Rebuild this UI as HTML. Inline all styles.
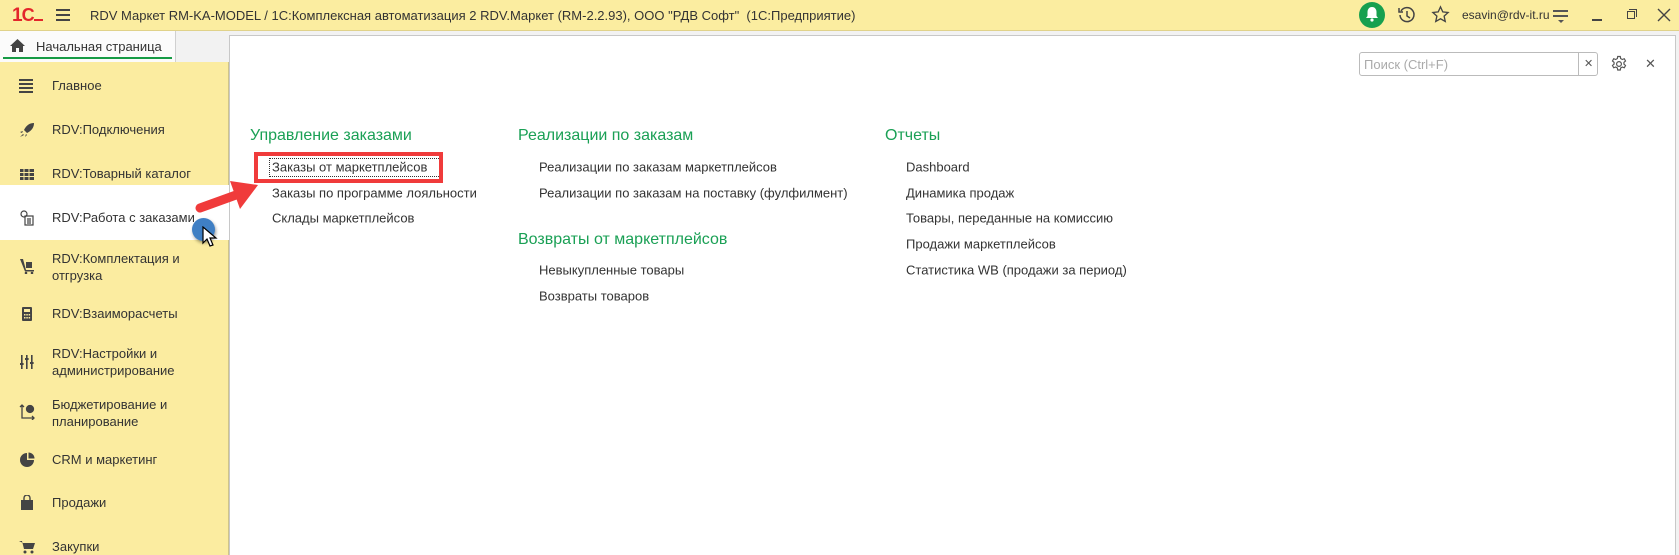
<!DOCTYPE html>
<html><head><meta charset="utf-8">
<style>
*{margin:0;padding:0;box-sizing:border-box}
html,body{width:1679px;height:555px;overflow:hidden;background:#f2f2f2}
body{font-family:"Liberation Sans",Arial,sans-serif;font-size:13px;color:#333;position:relative}
.a{position:absolute;white-space:nowrap}
#top{position:absolute;left:0;top:0;width:1679px;height:31px;background:#fbeda0;border-bottom:1px solid #e0d28a}
#tab{position:absolute;left:0;top:31px;width:176px;height:31px;background:#fbfbfb;border-right:1px solid #d0d0d0}
#side{position:absolute;left:0;top:62px;width:229px;height:493px;background:#fbeca0;border-right:1px solid #cfc48a}
#main{position:absolute;left:229px;top:35px;width:1447px;height:520px;background:#fff;border:1px solid #c8c8c8;border-bottom:none}
.si{position:absolute;left:52px;font-size:13px;color:#333;line-height:17px}
.ic{position:absolute;left:19px;width:16px;height:16px}
.h{position:absolute;color:#1aa055;font-size:16px;white-space:nowrap;transform:translateY(-50%)}
.l{position:absolute;color:#333;font-size:13px;white-space:nowrap;transform:translateY(-50%)}
</style></head><body>
<div id="top"></div>
<div class="a" style="left:12px;top:6px;color:#e3262b;font-weight:bold;font-size:19px;letter-spacing:-1px;line-height:19px">1<span style="font-size:18px">C</span></div>
<div class="a" style="left:34px;top:19px;width:9px;height:2px;background:#e3262b"></div>
<div class="a" style="left:56px;top:9px;width:14px;height:1.5px;background:#444;box-shadow:0 5px 0 #444,0 10px 0 #444"></div>
<div class="a" style="left:90px;top:8px;font-size:13px;color:#333">RDV Маркет RM-KA-MODEL / 1C:Комплексная автоматизация 2 RDV.Маркет (RM-2.2.93), ООО "РДВ Софт"&nbsp; (1С:Предприятие)</div>
<div class="a" style="left:1359px;top:2px;width:26px;height:26px;border-radius:50%;background:#17a04f"></div>
<svg class="a" style="left:1364px;top:6px" width="16" height="17" viewBox="0 0 16 17"><path d="M8 1c-3 0-4.5 2.5-4.5 5v4L2 12h12l-1.5-2V6C12.5 3.5 11 1 8 1z" fill="#fff"/><circle cx="8" cy="14" r="1.6" fill="#fff"/></svg>
<svg class="a" style="left:1397px;top:5px" width="20" height="20" viewBox="0 0 20 20" fill="none" stroke="#444" stroke-width="1.5"><path d="M4 6A7 7 0 1 1 3 10"/><path d="M2 3v4h4" /><path d="M10 6v5l3 2"/></svg>
<svg class="a" style="left:1431px;top:5px" width="19" height="19" viewBox="0 0 20 20" fill="none" stroke="#444" stroke-width="1.4"><path d="M10 2l2.4 5.3 5.6.6-4.2 3.8 1.2 5.6L10 14.5l-5 2.8 1.2-5.6L2 7.9l5.6-.6z"/></svg>
<div class="a" style="left:1462px;top:8px;font-size:12px;color:#333">esavin@rdv-it.ru</div>
<div class="a" style="left:1553px;top:10px;width:15px;height:1.5px;background:#555;box-shadow:0 5px 0 #555"></div>
<div class="a" style="left:1558px;top:20px;border:3px solid transparent;border-top:3px solid #555"></div>
<div class="a" style="left:1592px;top:19px;width:10px;height:1.5px;background:#444"></div>
<div class="a" style="left:1627px;top:11px;width:8px;height:8px;border:1.3px solid #444"></div>
<div class="a" style="left:1629px;top:9px;width:8px;height:8px;border-top:1.3px solid #444;border-right:1.3px solid #444"></div>
<svg class="a" style="left:1657px;top:8px" width="14" height="14" viewBox="0 0 14 14" stroke="#444" stroke-width="1.4"><path d="M1 1l12 12M13 1L1 13"/></svg>

<div id="tab"></div>
<svg class="a" style="left:10px;top:39px" width="15" height="13" viewBox="0 0 15 13"><path d="M7.5 0L0 7h2v6h4V9h3v4h4V7h2z" fill="#444"/></svg>
<div class="a" style="left:36px;top:39px;font-size:13px;color:#333">Начальная страница</div>
<div class="a" style="left:3px;top:57px;width:169px;height:2px;background:#169b45"></div>

<div id="side"></div>
<div class="a" style="left:0;top:185px;width:229px;height:55px;background:#fff"></div>
<div class="ic" style="top:78px"><div style="margin-top:1px;height:2px;background:#444;box-shadow:0 4px 0 #444,0 8px 0 #444,0 12px 0 #444;width:14px"></div></div>
<svg class="ic" style="top:122px" viewBox="0 0 16 16"><path d="M15 1c-5 0-8 3-10 7l3 3c4-2 7-5 7-10zM4 9l-3 1 2 1zM7 12l-1 3 2-2zM4 12l-3 3 4-2z" fill="#444"/></svg>
<svg class="ic" style="top:166px" viewBox="0 0 16 16" fill="#444"><rect x="1" y="3" width="14" height="3"/><rect x="1" y="7" width="14" height="3"/><rect x="1" y="11" width="14" height="3"/><rect x="4.5" y="3" width="1" height="11" fill="#fbeca0"/><rect x="9.5" y="3" width="1" height="11" fill="#fbeca0"/></svg>
<svg class="ic" style="top:210px" viewBox="0 0 16 16" fill="none" stroke="#444" stroke-width="1.2"><circle cx="5" cy="4" r="3"/><rect x="6" y="6" width="8" height="9"/><path d="M8 9h4M8 11h4M8 13h4"/></svg>
<svg class="ic" style="top:258px" viewBox="0 0 16 16" fill="#444"><path d="M1 1h3l3 11h8v1.5H6z"/><rect x="7" y="4" width="6" height="6"/><circle cx="7" cy="15" r="1.3"/><circle cx="13" cy="15" r="1.3"/></svg>
<svg class="ic" style="top:306px" viewBox="0 0 16 16" fill="#444"><rect x="3" y="1" width="10" height="14" rx="1"/><rect x="5" y="3" width="6" height="3" fill="#fbeca0"/><g fill="#fbeca0"><rect x="5" y="8" width="1.5" height="1.5"/><rect x="7.3" y="8" width="1.5" height="1.5"/><rect x="9.6" y="8" width="1.5" height="1.5"/><rect x="5" y="11" width="1.5" height="1.5"/><rect x="7.3" y="11" width="1.5" height="1.5"/><rect x="9.6" y="11" width="1.5" height="1.5"/></g></svg>
<svg class="ic" style="top:354px" viewBox="0 0 16 16" fill="#444"><rect x="2" y="1" width="1.6" height="14"/><rect x="7" y="1" width="1.6" height="14"/><rect x="12" y="1" width="1.6" height="14"/><rect x="1" y="9" width="3.6" height="2"/><rect x="6" y="4" width="3.6" height="2"/><rect x="11" y="8" width="3.6" height="2"/></svg>
<svg class="ic" style="top:404px" viewBox="0 0 16 16" fill="none" stroke="#444" stroke-width="1.3"><path d="M3 1v13h12M1 3l2-2 2 2M13 12l2 2-2 2"/><circle cx="11" cy="5" r="3.5" fill="#444"/></svg>
<svg class="ic" style="top:452px" viewBox="0 0 16 16"><path d="M8 1A7 7 0 1 0 15 8H8z" fill="#444"/><path d="M9.5 0.5V6.5H15.5A6 6 0 0 0 9.5 0.5z" fill="#444"/></svg>
<svg class="ic" style="top:495px" viewBox="0 0 16 16" fill="#444"><path d="M2 5h12v10H2z"/><path d="M5 5V3a3 3 0 0 1 6 0v2" fill="none" stroke="#444" stroke-width="1.4"/></svg>
<svg class="ic" style="top:539px" viewBox="0 0 16 16" fill="#444"><path d="M0 2h3l2 8h9l2-6H4"/><circle cx="6" cy="13" r="1.5"/><circle cx="13" cy="13" r="1.5"/></svg>
<div class="si" style="top:77px">Главное</div>
<div class="si" style="top:121px">RDV:Подключения</div>
<div class="si" style="top:165px">RDV:Товарный каталог</div>
<div class="si" style="top:209px">RDV:Работа с заказами</div>
<div class="si" style="top:250px">RDV:Комплектация и<br>отгрузка</div>
<div class="si" style="top:305px">RDV:Взаиморасчеты</div>
<div class="si" style="top:345px">RDV:Настройки и<br>администрирование</div>
<div class="si" style="top:396px">Бюджетирование и<br>планирование</div>
<div class="si" style="top:451px">CRM и маркетинг</div>
<div class="si" style="top:494px">Продажи</div>
<div class="si" style="top:538px">Закупки</div>

<div id="main"></div>
<div class="a" style="left:1359px;top:52px;width:239px;height:24px;border:1px solid #bbb;border-radius:3px;background:#fff"></div>
<div class="a" style="left:1578px;top:52px;width:1px;height:24px;background:#bbb"></div>
<div class="a" style="left:1364px;top:57px;font-size:13px;color:#aaa">Поиск (Ctrl+F)</div>
<div class="a" style="left:1584px;top:57px;font-size:11px;color:#555">✕</div>
<svg class="a" style="left:1610px;top:55px" width="18" height="18" viewBox="0 0 24 24" fill="none" stroke="#555" stroke-width="1.6"><circle cx="12" cy="12" r="3.2"/><path d="M10.3 2h3.4l.5 2.7 2.2 1.3 2.6-1 1.7 3-2.1 1.8v2.4l2.1 1.8-1.7 3-2.6-1-2.2 1.3-.5 2.7h-3.4l-.5-2.7-2.2-1.3-2.6 1-1.7-3 2.1-1.8v-2.4L3.3 8l1.7-3 2.6 1 2.2-1.3z"/></svg>
<div class="a" style="left:1645px;top:56px;font-size:13px;color:#555">✕</div>

<div class="h" style="left:250px;top:136px">Управление заказами</div>
<div class="l" style="left:272px;top:167px">Заказы от маркетплейсов</div>
<div class="a" style="left:269px;top:158px;width:174px;height:19px;border:1px dotted #333"></div>
<div class="a" style="left:254px;top:152px;width:189px;height:31px;border:4px solid #f03b3b"></div>
<div class="l" style="left:272px;top:193px">Заказы по программе лояльности</div>
<div class="l" style="left:272px;top:218px">Склады маркетплейсов</div>

<div class="h" style="left:518px;top:136px">Реализации по заказам</div>
<div class="l" style="left:539px;top:167px">Реализации по заказам маркетплейсов</div>
<div class="l" style="left:539px;top:193px">Реализации по заказам на поставку (фулфилмент)</div>
<div class="h" style="left:518px;top:240px">Возвраты от маркетплейсов</div>
<div class="l" style="left:539px;top:270px">Невыкупленные товары</div>
<div class="l" style="left:539px;top:296px">Возвраты товаров</div>

<div class="h" style="left:885px;top:136px">Отчеты</div>
<div class="l" style="left:906px;top:167px">Dashboard</div>
<div class="l" style="left:906px;top:193px">Динамика продаж</div>
<div class="l" style="left:906px;top:218px">Товары, переданные на комиссию</div>
<div class="l" style="left:906px;top:244px">Продажи маркетплейсов</div>
<div class="l" style="left:906px;top:270px">Статистика WB (продажи за период)</div>

<svg class="a" style="left:190px;top:175px" width="80" height="45" viewBox="0 0 80 45"><path d="M10 33L46 20" stroke="#f03b3b" stroke-width="9" stroke-linecap="round"/><path d="M40 6L68 10 50 34z" fill="#f03b3b"/></svg>
<div class="a" style="left:192px;top:218px;width:23px;height:23px;border-radius:50%;background:#3f7fc4;box-shadow:1px 2px 3px rgba(0,0,0,.4)"></div>
<svg class="a" style="left:202px;top:226px" width="16" height="22" viewBox="0 0 16 22"><path d="M1 1v16l4-4 3 7 3-1-3-7h6z" fill="#fff" stroke="#000" stroke-width="1.2"/></svg>
</body></html>
